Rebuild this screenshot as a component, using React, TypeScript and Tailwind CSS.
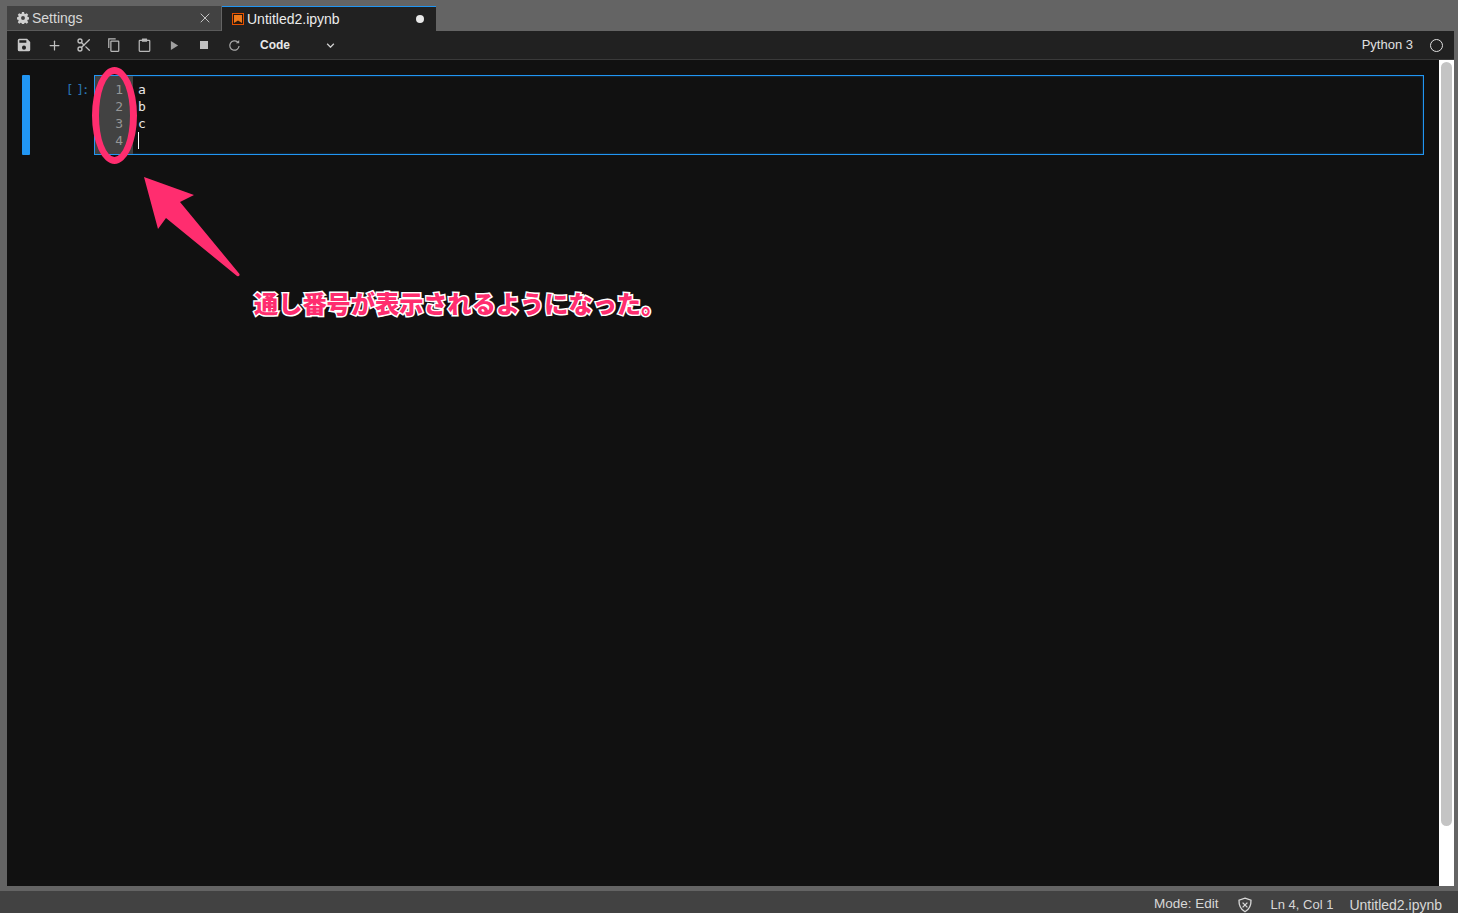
import { Plus, Scissors, X } from "lucide-react";

const uiFont = "font-['Liberation_Sans',Arial,sans-serif]";

function SaveIcon() {
  return (
    <svg viewBox="0 0 18 18" className="h-[14px] w-[14px] fill-[#c8c8c8]">
      <path d="M13 1H3a2 2 0 0 0-2 2v12a2 2 0 0 0 2 2h12a2 2 0 0 0 2-2V5l-4-4zM9 15a2.6 2.6 0 1 1 0-5.2A2.6 2.6 0 0 1 9 15zm3-9H3V3h9v3z" />
    </svg>
  );
}

function CopyIcon() {
  return (
    <svg viewBox="0 0 14 16" className="-ml-px h-[14px] w-[13px] fill-none stroke-[#b8b8b8]" strokeWidth="1.4">
      <path d="M9.5 1H1.6v10.5" />
      <rect x="4" y="3.6" width="9" height="11.6" rx="0.6" />
    </svg>
  );
}

function PasteIcon() {
  return (
    <svg viewBox="0 0 14 16" className="h-[14px] w-[13px]">
      <rect x="1" y="2.6" width="12" height="12.6" rx="0.8" fill="none" stroke="#b8b8b8" strokeWidth="1.4" />
      <rect x="4" y="0.6" width="6" height="3.6" rx="0.6" fill="#b8b8b8" />
    </svg>
  );
}

function RestartIcon() {
  return (
    <svg viewBox="0 0 16 16" className="h-[13px] w-[13px] fill-none stroke-[#a8a8a8]" strokeWidth="1.5">
      <path d="M13.6 8.6a5.7 5.7 0 1 1-1.7-4.6" />
      <path d="M13.8 1.2v4h-4" fill="#a8a8a8" stroke="none" />
    </svg>
  );
}

function ToolbarButton({ children }: { children: React.ReactNode }) {
  return <div className="flex h-full w-[30px] items-center justify-center">{children}</div>;
}

function Toolbar() {
  return (
    <div className={`flex h-[29px] items-center border-b border-[#3a3a3a] bg-[#212121] pl-[2px] pr-[11px] ${uiFont}`}>
      <ToolbarButton><SaveIcon /></ToolbarButton>
      <ToolbarButton><Plus size={15} color="#c0c0c0" strokeWidth={2} /></ToolbarButton>
      <ToolbarButton><Scissors size={16} color="#c0c0c0" strokeWidth={2} /></ToolbarButton>
      <ToolbarButton><CopyIcon /></ToolbarButton>
      <ToolbarButton><PasteIcon /></ToolbarButton>
      <ToolbarButton>
        <svg viewBox="0 0 10 12" className="ml-px h-[11px] w-[9px] fill-[#a0a0a0]"><path d="M1 1l8 5-8 5z" /></svg>
      </ToolbarButton>
      <ToolbarButton><div className="h-2 w-2 bg-[#c0c0c0]" /></ToolbarButton>
      <ToolbarButton><RestartIcon /></ToolbarButton>
      <div className="ml-[11px] flex w-[75px] items-center justify-between text-xs font-bold text-[#e8e8e8]">
        <span>Code</span>
        <svg viewBox="0 0 10 6" className="h-[5px] w-[9px] fill-none stroke-[#d0d0d0]" strokeWidth="1.6"><path d="M1 1l4 4 4-4" /></svg>
      </div>
      <div className="ml-auto text-[13px] text-[#e0e0e0]">Python 3</div>
      <div className="ml-[17px] h-[13px] w-[13px] rounded-full border border-[#e0e0e0]" />
    </div>
  );
}

function TabBar() {
  return (
    <div className={`flex h-[25px] items-stretch text-sm ${uiFont}`}>
      <div className="flex w-[214px] items-center border-b border-[#5a5a5a] bg-[#424242] pl-[10px] pr-2 text-[#d8d8d8]">
        <svg viewBox="0 0 16 16" className="mr-[3px] h-3 w-3 fill-[#d0d0d0]">
          <path fillRule="evenodd" d="M6.6 0h2.8l.4 2.2 1.3.6 1.9-1.3 2 2-1.3 1.9.6 1.3 2.2.4v2.8l-2.2.4-.6 1.3 1.3 1.9-2 2-1.9-1.3-1.3.6-.4 2.2H6.6l-.4-2.2-1.3-.6L3 15.5l-2-2 1.3-1.9-.6-1.3L-.5 9.9V7.1l2.2-.4.6-1.3L1 3.5l2-2 1.9 1.3 1.3-.6zM8 5.4a2.6 2.6 0 1 0 0 5.2 2.6 2.6 0 0 0 0-5.2z" />
        </svg>
        <span>Settings</span>
        <X size={16} color="#cccccc" strokeWidth={1.4} className="ml-auto" />
      </div>
      <div className="ml-px flex w-[214px] items-center border-t border-[#2196f3] bg-[#212121] pl-[10px] pr-[12px] text-[#ececec]">
        <div className="mr-[3px] flex h-3 w-3 items-center justify-center border border-[#e65100] bg-[#2a1a10]">
          <svg viewBox="0 0 8 8" className="h-2 w-2 fill-[#ef7a1a]"><path d="M0 0h8v8L4 5.6 0 8z" /></svg>
        </div>
        <span>Untitled2.ipynb</span>
        <div className="ml-auto h-2 w-2 rounded-full bg-[#e8e8e8]" />
      </div>
    </div>
  );
}

function Cell() {
  return (
    <div className="flex h-20 font-['DejaVu_Sans_Mono',monospace] text-[13px] leading-[17px]">
      <div className="h-20 w-2 rounded-[1px] bg-[#2196f3]" />
      <div className="w-[64px] pr-[7px] pt-[6px] text-right tracking-[-2.5px] text-[#2a73b0]">[ ]:</div>
      <div className="flex flex-1 border border-[#2196f3] shadow-[inset_0_0_2px_rgba(33,150,243,0.5)]">
        <div className="w-[38px] bg-[#424242] pr-[10px] pt-[5px] text-right text-[#969696]">
          <div>1</div>
          <div>2</div>
          <div>3</div>
          <div>4</div>
        </div>
        <div className="pl-[5px] pt-[5px] text-[#e8e8e8]">
          <div>a</div>
          <div>b</div>
          <div>c</div>
          <div className="h-[17px] w-px bg-white" />
        </div>
      </div>
    </div>
  );
}

function Annotations() {
  return (
    <>
      <div className="absolute left-[92px] top-[67px] h-[97px] w-[45px] rounded-[50%] border-[7px] border-[#ff2d6f]" />
      <svg className="absolute left-[140px] top-[172px]" width="104" height="110" viewBox="0 0 104 110">
        <path d="M4 5L54 23L40 30L99.5 102Q100 105 97 104L26 46L18 57Z" fill="#ff2d6f" />
      </svg>
      <div className="absolute left-[254px] top-[287px] whitespace-nowrap font-['Noto_Sans_CJK_JP',sans-serif] text-[24.2px] font-black leading-[32px] text-[#ff2d6f] [-webkit-text-stroke:3px_#ffffff] [paint-order:stroke_fill]">
        通し番号が表示されるようになった。
      </div>
    </>
  );
}

function StatusBar() {
  return (
    <div className={`mt-[5px] flex h-[22px] items-center justify-end bg-[#424242] pr-4 pt-[5px] text-[13.5px] text-[#d8d8d8] ${uiFont}`}>
      <span>Mode: Edit</span>
      <svg viewBox="0 0 16 16" className="ml-[18px] h-4 w-4 fill-none stroke-[#d8d8d8]" strokeWidth="1.3">
        <path d="M8 1.2l6 2c.2 5-1.6 9-6 11.6C3.600 12.200 1.800 8.200 2 3.200z" />
        <path d="M5.600 5.600l4.800 4.800M10.400 5.600l-4.800 4.800" />
      </svg>
      <span className="ml-[18px] text-[13px]">Ln 4, Col 1</span>
      <span className="ml-4 text-sm">Untitled2.ipynb</span>
    </div>
  );
}

export default function App() {
  return (
    <div className="relative flex h-[913px] w-[1458px] flex-col overflow-hidden bg-[#646464] pt-[6px]">
      <div className="flex flex-1 flex-col pl-[7px] pr-1">
        <TabBar />
        <Toolbar />
        <div className="flex flex-1">
          <div className="flex-1 bg-[#111111] pl-[15px] pr-[15px] pt-[15px]">
            <Cell />
          </div>
          <div className="w-[15px] bg-white px-[2px] py-[2px]">
            <div className="h-[764px] rounded-full bg-[#c4c4c4]" />
          </div>
        </div>
      </div>
      <StatusBar />
      <Annotations />
    </div>
  );
}
